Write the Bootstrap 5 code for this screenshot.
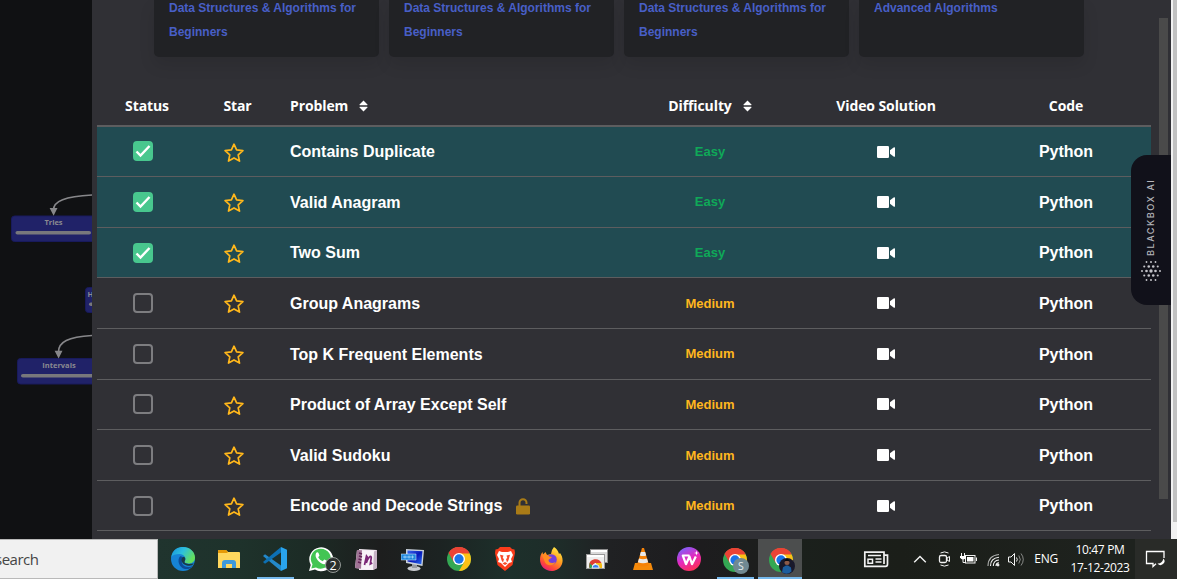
<!DOCTYPE html>
<html lang="en">
<head>
<meta charset="utf-8">
<meta name="viewport" content="width=device-width, initial-scale=1">
<title>Arrays &amp; Hashing</title>
<link href="https://cdn.jsdelivr.net/npm/bootstrap@5.3.0/dist/css/bootstrap.min.css" rel="stylesheet">
<style>
body{height:579px;overflow:hidden;background:#101113;font-family:"Liberation Sans",Arial,sans-serif}
.stage{height:539px}
.roadmap{width:92px;background:#101113}
.roadmap text{font:bold 7.5px "Open Sans",sans-serif;fill:#8b8b90}
.panel{width:1079px;background:#303035}
.panel-main{width:1059px;padding-left:5px}
.courses{height:57px;gap:10px;padding-left:57px}
.course{width:225px;background:#212225;border-radius:0 0 5px 5px;padding-left:15px;box-shadow:0 8px 16px rgba(10,10,10,.1)}
.course a{display:block;margin-top:-4px;color:#485fc7;font-size:12px;font-weight:700;line-height:24px}
.line{display:grid;grid-template-columns:100px 81px 351px 162px 190px 170px;align-items:center;height:50.625px;border-bottom:1px solid #5d5d5f;color:#fff;font-weight:700;font-size:16px}
.line.first{height:50.1px}
.line.solved{background:#214b52}
.line.heads{height:70px;border-bottom:2px solid #5d5d5f;font:bold 14px "Open Sans",sans-serif;padding-top:29px;align-items:start;line-height:40px;letter-spacing:-.1px}
.line:not(.first) .strong{padding-top:1.6px}
.tick{width:20px;height:20px;border:2px solid #7d7d80;border-radius:4px}
.first .tick{margin-top:-1px}
.solved .tick{background:#48c78e;border-color:#48c78e}
.easy,.medium{font-size:13px}
.easy{color:#0fa958}.medium{color:#ffb61e;padding-top:.6px}
.star-cell{padding-top:2.4px}
.sort{margin-left:11px;margin-top:-3px}
.rail{width:20px}
.rail-thumb{width:9px;height:481px;margin:18px 0 0 8px;background:#4a4a4a}
.page-bar{width:6px;background:#f1f1f1}
.page-bar div{width:4px;height:522px;margin-left:2px;background:#c1c1c1}
.blackbox{right:6px;top:155px;width:40px;height:150px;background:#11111a;border-radius:16px 0 0 16px}
.blackbox span{writing-mode:vertical-rl;transform:rotate(180deg);font-family:Inter,"Liberation Sans",sans-serif;font-size:9px;font-weight:500;line-height:12px;letter-spacing:1.6px;color:#b5b5bb;height:80px;margin-top:21px;white-space:nowrap}
.taskbar{height:40px;background:linear-gradient(90deg,#20342e 158px,#1e322b 240px,#1c2b25 310px,#1d1e1e 380px,#1c2322 440px,#1d302b 510px,#1e2c29 560px,#202123 610px,#1d1c1e 700px,#1b201c 800px,#1b1e19 900px,#1e221e 1100px);color:#fff;font-family:"Open Sans","Noto Sans",sans-serif}
.searchbox{width:158px;background:#f1f1f1;border:1px solid #b9b9b9;border-left:0;color:#454545;font-size:15px;letter-spacing:-.5px}
.searchbox span{margin-left:-5px}
.app{width:46px;height:40px}
.app svg{display:block}
.app.open::after{content:"";position:absolute;left:5px;bottom:0;width:37px;height:2px;background:#76b9ed}
.app.active{background:#4c4e4e;width:44px}
.app.active::after{left:0;width:44px}
.nudge{margin-left:-2px}
.clock{width:70px;font-size:12px;line-height:18px;letter-spacing:-.35px}
.lang{font-size:12px;letter-spacing:-.2px}
.notice{width:42px;background:#292b28}
</style>
</head>
<body>
<svg width="0" height="0" class="position-absolute">
  <defs>
    <symbol id="i-star" viewBox="0 0 20 20"><path d="M10 1.200l2.600 5.700 6.300.7-4.700 4.200 1.300 6.300-5.500-3.200-5.500 3.200 1.300-6.300L1.100 7.600l6.300-.7z" fill="none" stroke="#ffb71b" stroke-width="1.700" stroke-linejoin="round"/></symbol>
    <symbol id="i-video" viewBox="0 0 18 12"><rect width="12" height="12" rx="1.300" fill="#fff"/><path d="M13 4.200L16.600 1.400Q18 .7 18 2v8q0 1.300-1.400.6L13 7.800z" fill="#fff"/></symbol>
    <symbol id="i-sort" viewBox="0 0 10 12"><path d="M5 0l4.400 4.300q.5.900-.5.900H1.100q-1 0-.5-.900zM5 12L.6 7.700q-.5-.900.5-.900h7.800q1 0 .5.900z" fill="#fff"/></symbol>
    <symbol id="i-lock" viewBox="0 0 14 17"><rect y="7.500" width="14" height="9" rx="1.300" fill="#a97b17"/><path d="M3.500 8V4.700a3.500 3.500 0 0 1 7 0V6" fill="none" stroke="#a97b17" stroke-width="2"/></symbol>
    <symbol id="i-chrome" viewBox="0 0 48 48"><circle cx="24" cy="24" r="24" fill="#34a853"/><path d="M3.200 12A24 24 0 0 1 44.800 12L24 24z" fill="#ea4335"/><path d="M3.200 12L13.600 30 24 13h21.300A24 24 0 0 0 3.200 12z" fill="#ea4335"/><path d="M45.300 13H24L34.400 30 24 48A24 24 0 0 0 45.300 13z" fill="#fbc116"/><circle cx="24" cy="24" r="12" fill="#fff"/><circle cx="24" cy="24" r="9.300" fill="#1a73e8"/></symbol>
    <linearGradient id="g-edge" x2="1" y2=".5"><stop offset="0" stop-color="#1590dc"/><stop offset=".5" stop-color="#2dc0dd"/><stop offset="1" stop-color="#65df5b"/></linearGradient>
    <linearGradient id="g-fox" x1=".8" y1="0" x2=".2" y2="1"><stop offset="0" stop-color="#fff04a"/><stop offset=".4" stop-color="#ffa321"/><stop offset=".75" stop-color="#ff4a37"/><stop offset="1" stop-color="#e31587"/></linearGradient>
    <linearGradient id="g-wps" x1=".2" y1="0" x2=".7" y2="1"><stop offset="0" stop-color="#7665ff"/><stop offset=".5" stop-color="#e329c0"/><stop offset="1" stop-color="#ff304f"/></linearGradient>
    <linearGradient id="g-screen" x1="0" y1="0" x2="1" y2="1"><stop offset="0" stop-color="#3b6af0"/><stop offset=".5" stop-color="#0719b8"/><stop offset="1" stop-color="#2a70f5"/></linearGradient>
  </defs>
</svg>

<main class="stage d-flex position-relative">
  <aside class="roadmap">
    <svg class="d-block" width="92" height="539">
      <g fill="#202268" stroke="#181a5c"><rect x="11.500" y="216" width="100" height="25.500" rx="3"/><rect x="85.500" y="287.500" width="60" height="25" rx="3"/><rect x="17.500" y="358.500" width="100" height="25.500" rx="3"/></g>
      <g fill="#78787c"><rect x="15.500" y="231" width="75.500" height="3.600" rx="1.800"/><rect x="89" y="302.500" width="50" height="3.600" rx="1.800"/><rect x="21" y="374" width="90" height="3.600" rx="1.800"/></g>
      <text x="53.500" y="225.200" text-anchor="middle">Tries</text><text x="87.500" y="296.500">H</text><text x="59" y="368.200" text-anchor="middle">Intervals</text>
      <path d="M92 195C65 196.500 53.500 201 53.500 210M92 335.500C68 337 58.500 342 58.500 352" fill="none" stroke="#87878a" stroke-width="1.700"/>
      <path d="M49.600 208h7.900l-3.900 7.700zM54.600 350.800h7.900l-3.900 7.700z" fill="#87878a"/>
    </svg>
  </aside>

  <section class="panel d-flex">
    <div class="panel-main">
      <div class="courses d-flex">
        <div class="course"><a class="text-decoration-none">Data Structures &amp; Algorithms for<br>Beginners</a></div>
        <div class="course"><a class="text-decoration-none">Data Structures &amp; Algorithms for<br>Beginners</a></div>
        <div class="course"><a class="text-decoration-none">Data Structures &amp; Algorithms for<br>Beginners</a></div>
        <div class="course"><a class="text-decoration-none">Advanced Algorithms</a></div>
      </div>
      <div id="problems">
        <div class="line heads text-center">
          <div>Status</div><div>Star</div>
          <div class="text-start ps-2 ms-1">Problem<svg class="sort" width="9" height="12"><use href="#i-sort"/></svg></div>
          <div>Difficulty<svg class="sort" width="9" height="12"><use href="#i-sort"/></svg></div>
          <div>Video Solution</div><div>Code</div>
        </div>
      </div>
    </div>
    <div class="rail"><div class="rail-thumb"></div></div>
  </section>
  <div class="page-bar"><div></div></div>

  <div class="blackbox position-absolute d-flex flex-column align-items-center">
    <span>BLACKBOX AI</span>
    <svg id="dots" width="22" height="22" class="mt-1"></svg>
  </div>
</main>

<footer class="taskbar d-flex">
  <div class="searchbox d-flex align-items-center"><span>search</span></div>
  <nav class="d-flex ps-1" style="margin-left:-2px">
    <div class="app d-flex align-items-center justify-content-center"><svg width="24" height="24" viewBox="0 0 24 24"><circle cx="12" cy="12" r="12" fill="#1683d5"/><path d="M.2 10C2 2 7 0 12 0c7 0 12 5 12 10.500 0 4-3 6-6.500 6-3 0-4.500-1.300-3.800-2.300C16 11 13 7 8.500 7 4.500 7 1.500 8 .2 10z" fill="url(#g-edge)"/><path d="M9 9.500c-3 3-1.500 11 5 12.500 3 .5 6-.5 8-3.500-4 3-10 1.500-11-2.500-.6-2 .4-4 1.500-4.500C12 10 10 9 9 9.500z" fill="#0d4c98"/><path d="M13.700 14.200c1.200-2 .6-3.700-.7-4.500-2 .3-2.900 2.600-2.300 4.500.8 2.700 4 4.600 7.800 4.600 2 0 3.500-.8 4.200-2.500-2.500 1-10.500 1-9-2.100z" fill="#193a45"/></svg></div>
    <div class="app d-flex align-items-center justify-content-center"><svg width="22" height="18" viewBox="0 0 22 18"><path d="M0 1q0-1 1-1h7l2 2h11q1 0 1 1v15H0z" fill="#ffd75e"/><path d="M0 1q0-1 1-1h7l2 2-1 1H0z" fill="#e69a08"/><path d="M4 18v-5q0-3 3-3h8q3 0 3 3v5h-4v-4H8v4z" fill="#3d99dc"/></svg></div>
    <div class="app open position-relative d-flex align-items-center justify-content-center"><svg width="24" height="24" viewBox="0 0 24 24"><path d="M0 9l2-1.700L18 18.500V24z" fill="#2489ca"/><path d="M0 15l2 1.700L18 5.500V0z" fill="#0d70b3"/><path d="M18 0l6 2.700v18.600L18 24z" fill="#29a4ed"/></svg></div>
    <div class="app position-relative d-flex align-items-center justify-content-center"><svg width="34" height="28" viewBox="0 0 34 28" style="margin-left:6px"><path d="M2 26l1.700-6A12 12 0 1 1 8 24.500z" fill="#fff"/><path d="M4.300 23.600l1.200-4.400a10 10 0 1 1 3.500 3.200z" fill="#43c553"/><path d="M9 8.300c.8-1.500 2-1.300 2.500-.2l1 2.300-1.300 1.900c1 2 2.500 3.300 4.500 4l1.600-1.800 3 1.500c.3 2-1.500 3.300-3.400 3.200C12.500 18.500 7 12.500 9 8.300z" fill="#fff"/><circle cx="26" cy="20" r="7.500" fill="#2a302e" stroke="#949997"/><text x="26" y="24.500" text-anchor="middle" fill="#fff" font-size="12.500">2</text></svg></div>
    <div class="app d-flex align-items-center justify-content-center"><svg class="nudge" width="22" height="23" viewBox="0 0 22 23"><path d="M4 1l18 1v18l-4 2H4z" fill="#f3e9f2"/><path d="M18 4l4-2v18l-4 2z" fill="#c6b2c5"/><path d="M2 2l17 1-1 19-18-2z" fill="#f8f2f7"/><path d="M2 2l5 .3L6 20.700 0 20z" fill="#a07495"/><path d="M4 5l3 1M4 8l3 1M3.500 11l3 1M3 14l3 1" stroke="#622356" stroke-width="1.500"/><path d="M9.500 17l2-9 .8 1-1 6c1.500-5 4.700-8.500 5-5.500l-1 6.500 2-1" fill="none" stroke="#7b2676" stroke-width="1.700"/></svg></div>
    <div class="app d-flex align-items-center justify-content-center"><svg class="nudge" width="23" height="23" viewBox="0 0 23 23"><ellipse cx="13" cy="20.500" rx="6.500" ry="2.500" fill="#c8cbd0"/><path d="M11 15h5v5h-5z" fill="#979ba2"/><path d="M5 1l18 1-1.500 16L5 15z" fill="#c9d1db"/><path d="M6.500 2.500l15 .7-1.200 13L6.500 13.500z" fill="url(#g-screen)"/><path d="M0 6h15v6H0z" fill="#2087dd" stroke="#e9f5ff" stroke-width=".5"/><path d="M2 9h11M4 7.500v3M8 7.500v3M11.500 7.500v3" stroke="#a9d8fa" stroke-width=".8"/></svg></div>
    <div class="app d-flex align-items-center justify-content-center"><svg width="24" height="24"><use href="#i-chrome"/></svg></div>
    <div class="app d-flex align-items-center justify-content-center"><svg width="20" height="24" viewBox="0 0 20 24"><path d="M5 0h10l2 2 2.500.5L20 6l-2.500 12L10 24l-7.500-6L0 6l.5-3.500L3 2z" fill="#fa3c1b"/><path d="M4 4l3 1h6l3-1 2 4-2 4 1 3-3 1-4 4-4-4-3-1 1-3-2-4z" fill="#fff"/><path d="M5 7.800l3.500.8-.8 2.400 1.300 1-1 3.500-1.500-2.300zM15 7.800l-3.500.8.800 2.400-1.300 1 1 3.500 1.500-2.300zM7.500 16.500L10 15l2.500 1.500L10 18z" fill="#f84b2a"/></svg></div>
    <div class="app d-flex align-items-center justify-content-center"><svg width="23" height="24" viewBox="0 0 23 24"><path d="M14 0c4 3 4.500 5 5 7l1-1c3 4 3.500 9 1 13-2 3.500-6 5-9.500 5C5 24 0 19 0 12.500 0 9 1 7 2.500 5L3 7.500 5.500 5 7 8l4-1 1-4z" fill="url(#g-fox)"/><circle cx="11.500" cy="12.500" r="5.300" fill="#7340dc"/><path d="M2 8c4-1 6 0 7.500 1.500L12 10c-1 2-3 1.500-3.500 3 0 3 4 4 7 2-2 5-10 4-11-1z" fill="#ff8b23"/></svg></div>
    <div class="app d-flex align-items-center justify-content-center"><svg width="22" height="20" viewBox="0 0 22 20"><rect x="4.500" y=".5" width="17" height="13" fill="#dadada" stroke="#8d8d8d"/><path d="M5 2h16" stroke="#fff" stroke-width="2"/><rect x=".5" y="5.500" width="18" height="14" fill="#eee" stroke="#999"/><path d="M1 7h17" stroke="#fff" stroke-width="2"/><path d="M3 19v-3a6.600 6.600 0 0 1 12.500-2H9z" fill="#df4034"/><path d="M3.500 19v-5l5 5z" fill="#2ca554"/><path d="M10 14h5.500q1 2 .5 5h-5z" fill="#f5bc16"/><path d="M6 19a3.600 3.600 0 0 1 7.200 0z" fill="#3880ee" stroke="#fff" stroke-width=".8"/></svg></div>
    <div class="app d-flex align-items-center justify-content-center"><svg width="20" height="22" viewBox="0 0 20 22"><path d="M2 15h16l2 7H0z" fill="#f58a0b"/><path d="M9 0h2l5 17q-6 3-12 0z" fill="#f58208"/><path d="M7.800 4h4.400l1 3.500q-3.200 1-6.400 0zM6 10.500q4 1.300 8 0l1.100 3.700q-5.100 2-10.200 0z" fill="#e9e9e9"/></svg></div>
    <div class="app d-flex align-items-center justify-content-center"><svg width="24" height="24" viewBox="0 0 24 24"><circle cx="12" cy="12" r="12" fill="url(#g-wps)"/><path d="M12.500 8.500H5.800L9 17.200 12.500 9.500 15 17.200 18.800 9.500" fill="none" stroke="#fff" stroke-width="2.200" stroke-linejoin="round"/><path d="M19.500 3.500l.6 1.900 1.900.6-1.900.6-.6 1.900-.6-1.900L17 6l1.900-.6z" fill="#fff"/></svg></div>
    <div class="app open position-relative d-flex align-items-center justify-content-center"><svg width="26" height="26" viewBox="0 0 26 26" class="mt-1" style="margin-left:2px"><use href="#i-chrome" width="24" height="24"/><circle cx="18" cy="18" r="8" fill="#708992"/><text x="18" y="22" text-anchor="middle" font-size="10.500" fill="#e5edef">S</text></svg></div>
    <div class="app open active position-relative d-flex align-items-center justify-content-center"><svg width="26" height="26" viewBox="0 0 26 26" class="mt-1 ms-1"><use href="#i-chrome" width="24" height="24"/><circle cx="18" cy="18" r="8" fill="#19192b"/><circle cx="18" cy="14.500" r="2.500" fill="#8b5a49"/><path d="M15.500 14q0-3 2.500-3t2.500 3l-1-1h-3z" fill="#090b12"/><path d="M13 24.200l1-5 3-1.700h2l3 2 .5 4q-4.500 4-9.500.7z" fill="#1c5d9e"/></svg></div>
  </nav>
  <div class="ms-auto d-flex align-items-center">
    <svg width="270" height="40" viewBox="859 539 270 40" fill="none" stroke="#f2f2f2" style="margin-right:-66px">
      <g stroke-width="1.700"><path d="M885 552.200h-19.200v14.200h20.700q2-.2 2-2.200v-9h-3.500zM885 552v12"/><path d="M869 555.500h13M876.500 559h6M876.500 562h6M869 559.200h4.500v4H869z" stroke-width="1.500"/></g>
      <path d="M915.200 562.200l5.800-5.800 5.800 5.800" stroke-width="1.400"/>
      <path d="M941.500 553q4-2.200 8 0M941.500 565q4 2.200 8 0"/><rect x="940.500" y="555.500" width="7" height="7" rx="1.500" stroke-width="1.300"/><path d="M948 558l2.500-1.500v5L948 560z"/>
      <rect x="966.500" y="555.500" width="9.500" height="7.500"/><path d="M968 557h6.500v4.500H968z" fill="#fff" stroke="none"/><path d="M977.500 557.500v3.500"/><path d="M962.500 553v3M965.500 553v3"/><path d="M961 556h6v1.500q-1 2-3 2-2 0-3-2z" fill="#fff" stroke="none"/><path d="M964 559v3.500h2.500"/>
      <g stroke-width="1.100"><path d="M989 566q0-10.500 11-11.500" opacity=".7"/><path d="M991.500 566q0-8 8.500-8.800M994.300 566q0-5.500 5.700-6M997 566q0-3 3-3.200"/></g><circle cx="999" cy="565" r="1" fill="#fff"/>
      <path d="M1009.500 557h2.500l3.500-3.500v12L1012 562h-2.500z"/><path d="M1017.500 557.500q1.500 2 0 4"/><path d="M1019.800 555.500q3 4 0 8M1022 553.500q4.500 6 0 12" opacity=".5"/>
    </svg>
    <div class="lang" style="margin-left:-28px">ENG</div>
    <div class="clock text-center" style="margin-left:7px">10:47 PM<br>17-12-2023</div>
    <div class="notice h-100 d-flex align-items-center ps-1">
      <svg width="22" height="20" viewBox="0 0 22 20" fill="none" stroke="#fff" stroke-width="1.300" style="margin-left:6px"><path d="M11 14.700L8 17.500v-3H1.500V2.500h17.500V9"/><path d="M18.500 9.500a3.700 3.700 0 1 1-6 5q4.500.3 6-5z" fill="#fff" stroke="none"/></svg>
    </div>
  </div>
</footer>

<script>
  const problems = [
    ["Contains Duplicate", "Easy", 1], ["Valid Anagram", "Easy", 1], ["Two Sum", "Easy", 1],
    ["Group Anagrams", "Medium"], ["Top K Frequent Elements", "Medium"], ["Product of Array Except Self", "Medium"],
    ["Valid Sudoku", "Medium"], ["Encode and Decode Strings", "Medium", 0, 1]
  ];
  const check = '<svg class="d-block" width="16" height="16" viewBox="0 0 16 16"><path d="M1.500 8.500l4 4L14.500 3" fill="none" stroke="#fff" stroke-width="2.400"/></svg>';
  document.getElementById("problems").insertAdjacentHTML("beforeend", problems.map(([name, level, done, free], i) => `
    <div class="line text-center ${done ? "solved" : ""} ${i ? "" : "first"}">
      <div class="d-flex justify-content-center pe-2"><div class="tick">${done ? check : ""}</div></div>
      <div class="star-cell d-flex justify-content-center pe-2"><svg width="20" height="20"><use href="#i-star"/></svg></div>
      <div class="strong d-flex align-items-center text-start ps-2 ms-1">${name}${free ? '<svg style="margin-left:10px" width="22" height="17" viewBox="-4 0 22 17"><use href="#i-lock" width="14" height="17"/></svg>' : ""}</div>
      <div class="${level.toLowerCase()}">${level}</div>
      <div class="d-flex justify-content-center"><svg width="18" height="12"><use href="#i-video"/></svg></div>
      <div class="strong">Python</div>
    </div>`).join(""));

  // hexagonal dot cluster: larger dots toward the centre
  let dots = "";
  [[3, 2], [4, 6.500], [5, 11], [4, 15.500], [3, 20]].forEach(([n, y]) => {
    for (let k = 0; k < n; k++) {
      const x = 11 + (k - (n - 1) / 2) * 4.500, d = Math.hypot(x - 11, y - 11);
      dots += `<circle cx="${x}" cy="${y}" r="${(1.700 - d * 0.080).toFixed(2)}" fill="#c4c4ca"/>`;
    }
  });
  document.getElementById("dots").innerHTML = dots;
</script>
<script src="https://cdn.jsdelivr.net/npm/bootstrap@5.3.0/dist/js/bootstrap.bundle.min.js"></script>
</body>
</html>
